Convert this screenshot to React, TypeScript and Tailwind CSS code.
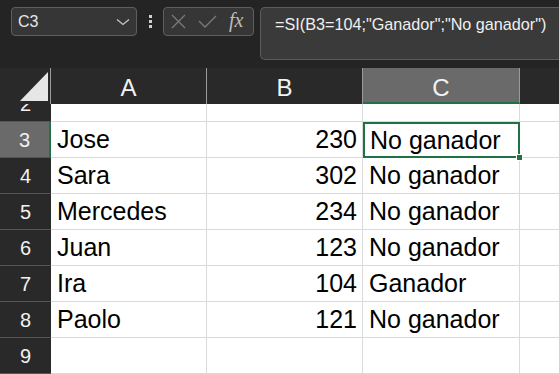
import React from "react";

type RowItem = {
  n: number;
  a: string;
  b: string;
  c: string;
};

const ROWS: RowItem[] = [
  { n: 3, a: "Jose", b: "230", c: "No ganador" },
  { n: 4, a: "Sara", b: "302", c: "No ganador" },
  { n: 5, a: "Mercedes", b: "234", c: "No ganador" },
  { n: 6, a: "Juan", b: "123", c: "No ganador" },
  { n: 7, a: "Ira", b: "104", c: "Ganador" },
  { n: 8, a: "Paolo", b: "121", c: "No ganador" },
  { n: 9, a: "", b: "", c: "" },
];

const FONT = "font-['Liberation_Sans',Arial,sans-serif]";

function Toolbar() {
  return (
    <div className="h-[68px] flex items-start pt-[7px] pl-[11px] bg-[#242424]">
      <div className="w-[126px] h-[29px] rounded-[4px] border border-[#5f5f5f] bg-[#363636] flex items-center justify-between pl-[6px] pr-[6px]">
        <span className="text-[16px] leading-none text-[#e6e6e6]">C3</span>
        <svg width="14" height="8" viewBox="0 0 14 8" fill="none">
          <path d="M1 1.5 L7 6.5 L13 1.5" stroke="#c8c8c8" strokeWidth="1.3" />
        </svg>
      </div>
      <div className="w-[26px] h-[29px] flex flex-col items-center justify-center gap-[2px]">
        <span className="w-[3px] h-[3px] bg-[#d0d0d0]"></span>
        <span className="w-[3px] h-[3px] bg-[#d0d0d0]"></span>
        <span className="w-[3px] h-[3px] bg-[#d0d0d0]"></span>
      </div>
      <div className="w-[91px] h-[29px] rounded-[4px] border border-[#5f5f5f] bg-[#363636] flex items-center pl-[7px] gap-[12px]">
        <svg width="15" height="15" viewBox="0 0 15 15" fill="none">
          <path d="M1 1 L14 14 M14 1 L1 14" stroke="#7a7a7a" strokeWidth="1.3" />
        </svg>
        <svg width="19" height="13" viewBox="0 0 19 13" fill="none">
          <path d="M1 6 L7 12 L18 1" stroke="#7a7a7a" strokeWidth="1.3" />
        </svg>
        <span className="font-['Liberation_Serif',serif] italic text-[20px] leading-none text-[#bdbdbd] -mt-[3px]">
          fx
        </span>
      </div>
      <div className="ml-[6px] flex-1 h-[53px] rounded-l-[5px] border border-r-0 border-[#5c5c5c] bg-[#3a3a3a] pl-[14px] pt-[5px]">
        <span className="text-[16.2px] leading-[20px] text-[#f0f0f0] whitespace-nowrap">
          =SI(B3=104;"Ganador";"No ganador")
        </span>
      </div>
    </div>
  );
}

function HeaderRow() {
  return (
    <div className="h-[36px] flex bg-[#292929] text-[24px] leading-[36px] text-[#f2f2f2]">
      <div className="relative w-[51px] h-full border-r border-[#9a9a9a]">
        <svg className="absolute left-[20px] top-[4px]" width="29" height="30" viewBox="0 0 29 30">
          <polygon points="0,29 28,0 28,29" fill="#e6e6e6" />
        </svg>
      </div>
      <div className="w-[156px] h-full border-r border-[#9a9a9a] text-center pt-[2px]">A</div>
      <div className="w-[156px] h-full border-r border-[#9a9a9a] text-center pt-[2px]">B</div>
      <div className="w-[157px] h-full border-r border-[#9a9a9a] bg-[#6a6a6a] border-b-2 border-b-[#1f7244] text-center pt-[2px]">
        C
      </div>
      <div className="flex-1 h-full"></div>
    </div>
  );
}

function RowHeader({ n, active }: { n: number; active?: boolean }) {
  return (
    <div
      className={
        active
          ? "w-[51px] h-full bg-[#6a6a6a] border-b border-[#555] border-r-2 border-r-[#1f7244] text-center text-[20px] leading-[36px] text-[#f2f2f2]"
          : "w-[51px] h-full bg-[#292929] border-b border-[#555] text-center text-[20px] leading-[36px] text-[#f2f2f2]"
      }
    >
      {n}
    </div>
  );
}

function DataRow({ row }: { row: RowItem }) {
  const active = row.n === 3;
  return (
    <div className="h-[36px] flex text-[25px] leading-[35px] text-black">
      <RowHeader n={row.n} active={active} />
      <div className="w-[156px] h-full border-r border-b border-[#dadada] bg-white pl-[6px] whitespace-nowrap">
        {row.a}
      </div>
      <div className="w-[156px] h-full border-r border-b border-[#dadada] bg-white pr-[5px] text-right">
        {row.b}
      </div>
      {active ? (
        <div className="relative w-[157px] h-full bg-white border-2 border-[#1f7244] pl-[5px] leading-[32px] whitespace-nowrap">
          {row.c}
          <span className="absolute -right-[5px] -bottom-[5px] w-[7px] h-[7px] bg-[#1f7244] border border-white"></span>
        </div>
      ) : (
        <div className="w-[157px] h-full border-r border-b border-[#dadada] bg-white pl-[6px] whitespace-nowrap">
          {row.c}
        </div>
      )}
      <div className="flex-1 h-full border-b border-[#dadada] bg-white"></div>
    </div>
  );
}

export default function App() {
  return (
    <div className={`w-[559px] h-[374px] overflow-hidden bg-[#242424] ${FONT}`}>
      <Toolbar />
      <HeaderRow />
      <div className="h-[18px] flex">
        <div className="w-[51px] h-full bg-[#292929] border-b border-[#555] overflow-hidden">
          <div className="-mt-[18px] h-[36px] text-center text-[20px] leading-[36px] text-[#f2f2f2]">2</div>
        </div>
        <div className="w-[156px] h-full border-r border-b border-[#dadada] bg-white"></div>
        <div className="w-[156px] h-full border-r border-b border-[#dadada] bg-white"></div>
        <div className="w-[157px] h-full border-r border-b border-[#dadada] bg-white"></div>
        <div className="flex-1 h-full border-b border-[#dadada] bg-white"></div>
      </div>
      {ROWS.map((row) => (
        <DataRow key={`row-${row.n}`} row={row} />
      ))}
    </div>
  );
}
